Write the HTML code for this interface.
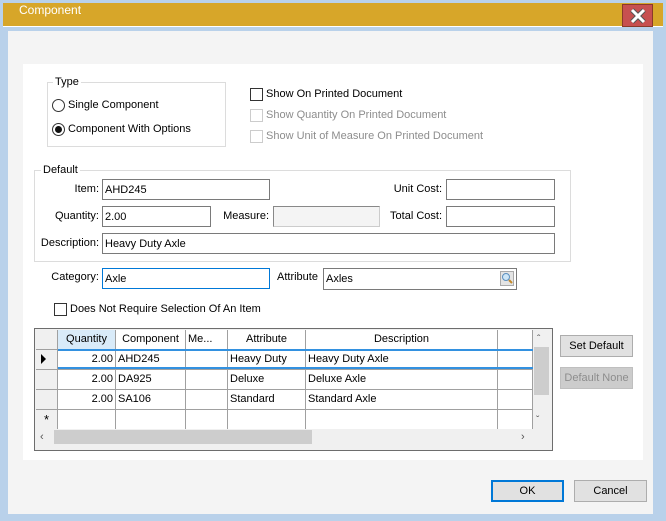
<!DOCTYPE html>
<html><head><meta charset="utf-8"><style>
*{box-sizing:border-box;margin:0;padding:0}
body{width:666px;height:521px;overflow:hidden;background:#b9d1ea;font-family:"Liberation Sans",sans-serif;font-size:11px;color:#000;position:relative}
div,span{position:absolute}
.t{white-space:nowrap;line-height:13px}
.in{background:#fff;border:1px solid #7a7a7a;padding:3px 2px 1px;line-height:14px;white-space:nowrap}
.cb{width:13px;height:13px;border:1px solid #333;background:#fff}
.cbd{border-color:#ccc}
.dis{color:#8d8d8d}
.gl{border:1px solid #dcdcdc}
.btn{background:#e1e1e1;border:1px solid #adadad;text-align:center;line-height:21px}
.cell{border-right:1px solid #a0a0a0;border-bottom:1px solid #a0a0a0;height:20px;line-height:19px;padding:0 2px;white-space:nowrap;overflow:hidden}
</style></head><body>
<div style="left:3px;top:3px;width:660px;height:23px;background:#d7a629"></div>
<div style="left:3px;top:26px;width:660px;height:1px;background:#fff"></div>
<div class="t" style="left:19px;top:4px;color:#fff;font-size:12px">Component</div>
<div style="left:622px;top:4px;width:31px;height:23px;background:#c75050;border:1px solid #8a3a2a"></div>
<svg style="position:absolute;left:628px;top:8px" width="20" height="16"><path d="M4 2 L16 14 M16 2 L4 14" stroke="#555" stroke-width="5"/><path d="M4 2 L16 14 M16 2 L4 14" stroke="#fff" stroke-width="3"/></svg>
<div style="left:8px;top:31px;width:645px;height:483px;background:#f4f4f4"></div>
<div style="left:23px;top:64px;width:620px;height:396px;background:#fff"></div>
<div class="gl" style="left:47px;top:82px;width:179px;height:65px"></div>
<div class="t" style="left:53px;top:76px;background:#fff;padding:0 2px">Type</div>
<div style="left:52px;top:99px;width:13px;height:13px;border:1px solid #333;border-radius:50%;background:#fff"></div>
<div class="t" style="left:68px;top:99px">Single Component</div>
<div style="left:52px;top:123px;width:13px;height:13px;border:1px solid #333;border-radius:50%;background:#fff"></div>
<div style="left:55px;top:126px;width:7px;height:7px;border-radius:50%;background:#111"></div>
<div class="t" style="left:68px;top:123px">Component With Options</div>
<div class="cb" style="left:250px;top:88px"></div>
<div class="t" style="left:266px;top:88px">Show On Printed Document</div>
<div class="cb cbd" style="left:250px;top:109px"></div>
<div class="t dis" style="left:266px;top:109px">Show Quantity On Printed Document</div>
<div class="cb cbd" style="left:250px;top:130px"></div>
<div class="t dis" style="left:266px;top:130px">Show Unit of Measure On Printed Document</div>
<div class="gl" style="left:34px;top:170px;width:537px;height:92px"></div>
<div class="t" style="left:41px;top:164px;background:#fff;padding:0 2px">Default</div>
<div class="t" style="left:40px;top:183px;width:59px;text-align:right">Item:</div>
<div class="in" style="left:102px;top:179px;width:168px;height:21px">AHD245</div>
<div class="t" style="left:40px;top:210px;width:59px;text-align:right">Quantity:</div>
<div class="in" style="left:102px;top:206px;width:109px;height:21px">2.00</div>
<div class="t" style="left:210px;top:210px;width:59px;text-align:right">Measure:</div>
<div class="in" style="left:273px;top:206px;width:107px;height:21px;background:#f4f4f4;border-color:#ccc;border-top-color:#888;border-left-color:#888"></div>
<div class="t" style="left:370px;top:183px;width:72px;text-align:right">Unit Cost:</div>
<div class="in" style="left:446px;top:179px;width:109px;height:21px"></div>
<div class="t" style="left:370px;top:210px;width:72px;text-align:right">Total Cost:</div>
<div class="in" style="left:446px;top:206px;width:109px;height:21px"></div>
<div class="t" style="left:30px;top:237px;width:69px;text-align:right">Description:</div>
<div class="in" style="left:102px;top:233px;width:453px;height:21px">Heavy Duty Axle</div>
<div class="t" style="left:40px;top:271px;width:59px;text-align:right">Category:</div>
<div class="in" style="left:102px;top:268px;width:168px;height:21px;border-color:#0078d7">Axle</div>
<div class="t" style="left:277px;top:271px">Attribute</div>
<div class="in" style="left:323px;top:268px;width:194px;height:22px">Axles</div>
<div style="left:500px;top:271px;width:14px;height:15px;background:#e4e4e4;border:1px solid #aaa"></div>
<svg style="position:absolute;left:501px;top:272px" width="13" height="13"><circle cx="5" cy="5" r="3.5" fill="#cde6f7" stroke="#5b8fbf"/><path d="M8 8 L11 11" stroke="#c58a2a" stroke-width="2"/></svg>
<div class="cb" style="left:54px;top:303px"></div>
<div class="t" style="left:70px;top:303px">Does Not Require Selection Of An Item</div>
<div style="left:34px;top:328px;width:519px;height:123px;border:1px solid #6d6d6d;background:#f0f0f0"></div>
<div style="left:36px;top:330px;width:497px;height:99px;background:#fff"></div>
<div class="cell" style="left:36px;top:330px;width:22px;background:#f0f0f0"></div>
<div class="cell" style="left:58px;top:330px;width:58px;background:#d9ebf9;text-align:center">Quantity</div>
<div class="cell" style="left:116px;top:330px;width:70px;text-align:center">Component</div>
<div class="cell" style="left:186px;top:330px;width:42px">Me...</div>
<div class="cell" style="left:228px;top:330px;width:78px;text-align:center">Attribute</div>
<div class="cell" style="left:306px;top:330px;width:192px;text-align:center">Description</div>
<div class="cell" style="left:498px;top:330px;width:35px"></div>
<div class="cell" style="left:36px;top:350px;width:22px;background:#f0f0f0"></div>
<div style="left:41px;top:354px;width:0;height:0;border-left:5px solid #000;border-top:5px solid transparent;border-bottom:5px solid transparent"></div>
<div class="cell" style="left:58px;top:350px;width:58px;text-align:right">2.00</div>
<div class="cell" style="left:116px;top:350px;width:70px">AHD245</div>
<div class="cell" style="left:186px;top:350px;width:42px"></div>
<div class="cell" style="left:228px;top:350px;width:78px">Heavy Duty</div>
<div class="cell" style="left:306px;top:350px;width:192px">Heavy Duty Axle</div>
<div class="cell" style="left:498px;top:350px;width:35px"></div>
<div class="cell" style="left:36px;top:370px;width:22px;background:#f0f0f0"></div>
<div class="cell" style="left:58px;top:370px;width:58px;text-align:right">2.00</div>
<div class="cell" style="left:116px;top:370px;width:70px">DA925</div>
<div class="cell" style="left:186px;top:370px;width:42px"></div>
<div class="cell" style="left:228px;top:370px;width:78px">Deluxe</div>
<div class="cell" style="left:306px;top:370px;width:192px">Deluxe Axle</div>
<div class="cell" style="left:498px;top:370px;width:35px"></div>
<div class="cell" style="left:36px;top:390px;width:22px;background:#f0f0f0"></div>
<div class="cell" style="left:58px;top:390px;width:58px;text-align:right">2.00</div>
<div class="cell" style="left:116px;top:390px;width:70px">SA106</div>
<div class="cell" style="left:186px;top:390px;width:42px"></div>
<div class="cell" style="left:228px;top:390px;width:78px">Standard</div>
<div class="cell" style="left:306px;top:390px;width:192px">Standard Axle</div>
<div class="cell" style="left:498px;top:390px;width:35px"></div>
<div class="cell" style="left:36px;top:410px;width:22px;background:#f0f0f0;text-align:center;font-size:13px">*</div>
<div class="cell" style="left:58px;top:410px;width:58px"></div>
<div class="cell" style="left:116px;top:410px;width:70px"></div>
<div class="cell" style="left:186px;top:410px;width:42px"></div>
<div class="cell" style="left:228px;top:410px;width:78px"></div>
<div class="cell" style="left:306px;top:410px;width:192px"></div>
<div class="cell" style="left:498px;top:410px;width:35px"></div>
<div style="left:58px;top:349px;width:490px;height:2px;background:#3391e0"></div>
<div style="left:58px;top:367px;width:490px;height:2px;background:#3391e0"></div>
<div style="left:533px;top:330px;width:18px;height:99px;background:#f0f0f0"></div>
<div style="left:534px;top:347px;width:15px;height:48px;background:#cdcdcd"></div>
<div class="t" style="left:537px;top:333px;font-size:10px;color:#555">&#710;</div>
<div class="t" style="left:536px;top:414px;font-size:10px;color:#555">&#711;</div>
<div style="left:36px;top:429px;width:515px;height:17px;background:#f0f0f0"></div>
<div style="left:54px;top:430px;width:258px;height:14px;background:#cdcdcd"></div>
<div class="t" style="left:40px;top:431px;color:#555">&lsaquo;</div>
<div class="t" style="left:521px;top:431px;color:#555">&rsaquo;</div>
<div class="btn" style="left:560px;top:335px;width:73px;height:22px">Set Default</div>
<div class="btn dis" style="left:560px;top:367px;width:73px;height:22px;background:#ccc;border-color:#bfbfbf">Default None</div>
<div class="btn" style="left:491px;top:480px;width:73px;height:22px;border:2px solid #0078d7;line-height:19px">OK</div>
<div class="btn" style="left:574px;top:480px;width:73px;height:22px">Cancel</div>
</body></html>
